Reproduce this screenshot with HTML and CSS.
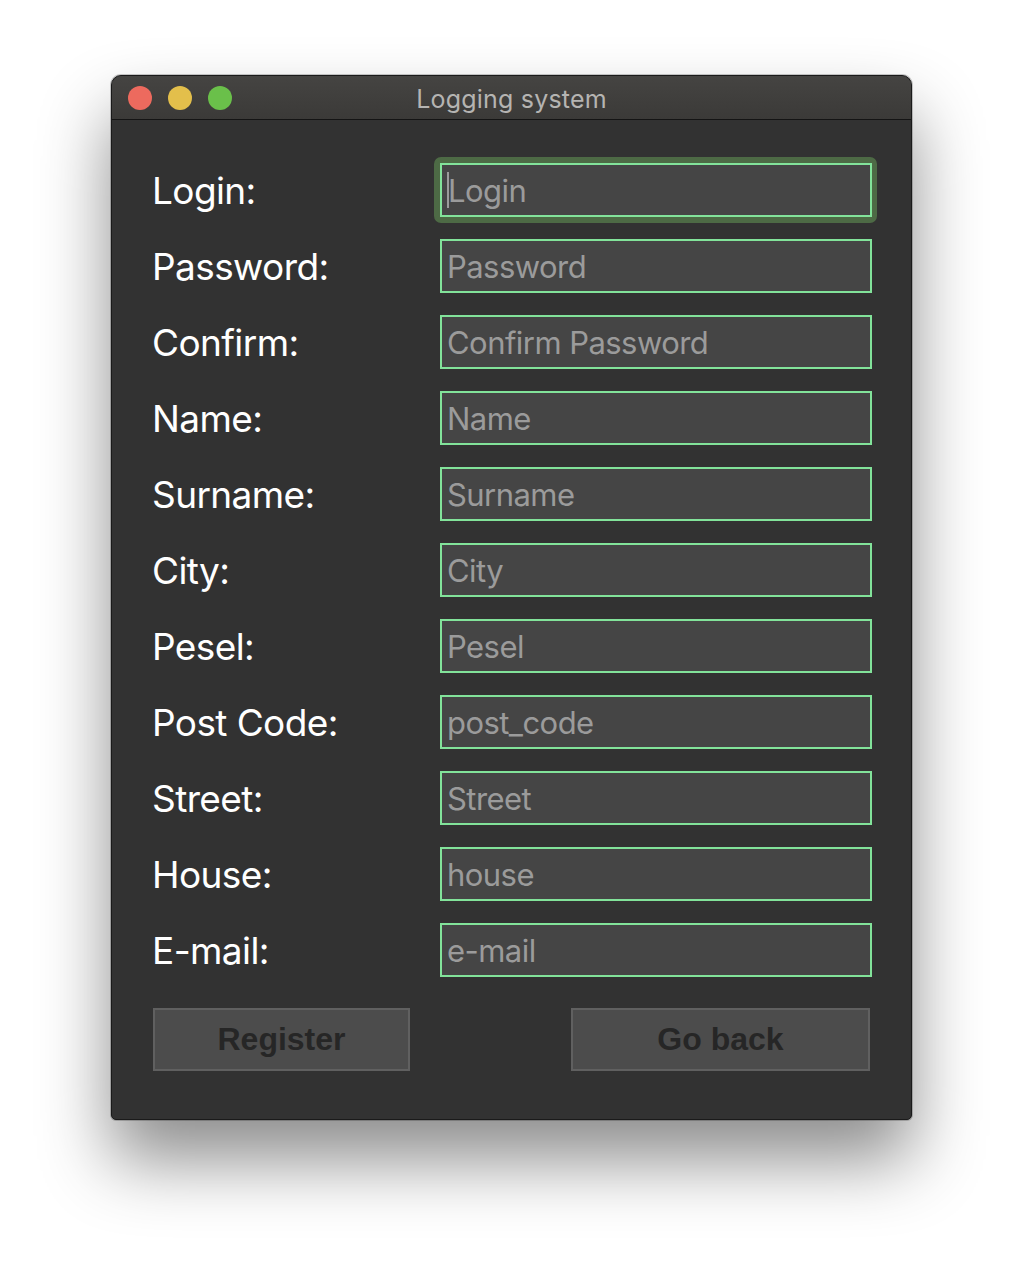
FILE: index.html
```html
<!DOCTYPE html>
<html>
<head>
<meta charset="utf-8">
<title>Logging system</title>
<link rel="stylesheet" href="styles.css">
</head>
<body>
<div class="window">
  <div class="titlebar">
    <div class="lights">
      <span class="light red"></span>
      <span class="light yellow"></span>
      <span class="light green"></span>
    </div>
    <div class="title">Logging system</div>
  </div>
  <div class="content">
    <div class="row">
      <div class="label">Login:</div>
      <div class="ring"><div class="field"><span class="caret"></span>Login</div></div>
    </div>
    <div class="row"><div class="label">Password:</div><div class="field">Password</div></div>
    <div class="row"><div class="label">Confirm:</div><div class="field">Confirm Password</div></div>
    <div class="row"><div class="label">Name:</div><div class="field">Name</div></div>
    <div class="row"><div class="label">Surname:</div><div class="field">Surname</div></div>
    <div class="row"><div class="label">City:</div><div class="field">City</div></div>
    <div class="row"><div class="label">Pesel:</div><div class="field">Pesel</div></div>
    <div class="row"><div class="label">Post Code:</div><div class="field">post_code</div></div>
    <div class="row"><div class="label">Street:</div><div class="field">Street</div></div>
    <div class="row"><div class="label">House:</div><div class="field">house</div></div>
    <div class="row"><div class="label">E-mail:</div><div class="field">e-mail</div></div>
    <div class="buttons">
      <div class="btn btn-register">Register</div>
      <div class="btn btn-back">Go back</div>
    </div>
  </div>
</div>
</body>
</html>
```
FILE: styles.css
```css
html, body {
  margin: 0;
  padding: 0;
  background: #ffffff;
}
body {
  width: 1024px;
  height: 1268px;
  padding-top: 75px;
  box-sizing: border-box;
  font-family: Inter, "Noto Sans", sans-serif;
}
.window {
  width: 801px;
  height: 1045px;
  margin-left: 111px;
  box-sizing: border-box;
  background: #323232;
  border: 1px solid #1a1a1a;
  border-radius: 10px 10px 5px 5px;
  box-shadow: 0 40px 70px rgba(0,0,0,0.45), 0 0 0 1px rgba(0,0,0,0.2);
  overflow: hidden;
  display: flex;
  flex-direction: column;
}
.titlebar {
  height: 44px;
  flex: none;
  box-sizing: border-box;
  background: linear-gradient(#454442, #3b3a38);
  border-bottom: 1px solid #141414;
  display: flex;
  align-items: center;
  position: relative;
}
.lights {
  display: flex;
  gap: 16px;
  padding-left: 16px;
}
.light {
  width: 24px;
  height: 24px;
  border-radius: 50%;
  display: block;
}
.red { background: #ed6a5e; }
.yellow { background: #e3bf4b; }
.green { background: #6ac04a; }
.title {
  position: absolute;
  left: 0;
  right: 0;
  top: 8px;
  text-align: center;
  color: #b5b4b2;
  font-size: 25px;
  letter-spacing: 0.2px;
}
.content {
  padding: 43px 39px 0 40px;
  display: flex;
  flex-direction: column;
  gap: 22px;
}
.row {
  display: flex;
  align-items: center;
  height: 54px;
}
.label {
  width: 288px;
  flex: none;
  color: #ffffff;
  font-size: 37px;
  letter-spacing: -0.6px;
}
.field {
  width: 432px;
  height: 54px;
  flex: none;
  box-sizing: border-box;
  background: #454545;
  border: 2px solid #82e39a;
  color: #9b9b9b;
  font-size: 31px;
  letter-spacing: -0.55px;
  padding-left: 5px;
  display: flex;
  align-items: center;
}
.ring {
  flex: none;
  margin: -6px -5px -6px -6px;
  padding: 6px 5px 6px 6px;
  border-radius: 7px;
  background: #4d6a45;
}
.caret {
  display: block;
  width: 2px;
  height: 36px;
  background: #9b9b9b;
  margin-right: -1px;
}
.buttons {
  display: flex;
  justify-content: space-between;
  margin-top: 9px;
  padding-right: 2px;
}
.btn {
  height: 63px;
  box-sizing: border-box;
  background: #4c4c4c;
  border: 2px solid #606060;
  color: #262626;
  font-family: "Liberation Sans", Arial, sans-serif;
  font-weight: bold;
  font-size: 32px;
  display: flex;
  align-items: center;
  justify-content: center;
}
.btn-register { width: 257px; margin-left: 1px; }
.btn-back { width: 299px; }
```
